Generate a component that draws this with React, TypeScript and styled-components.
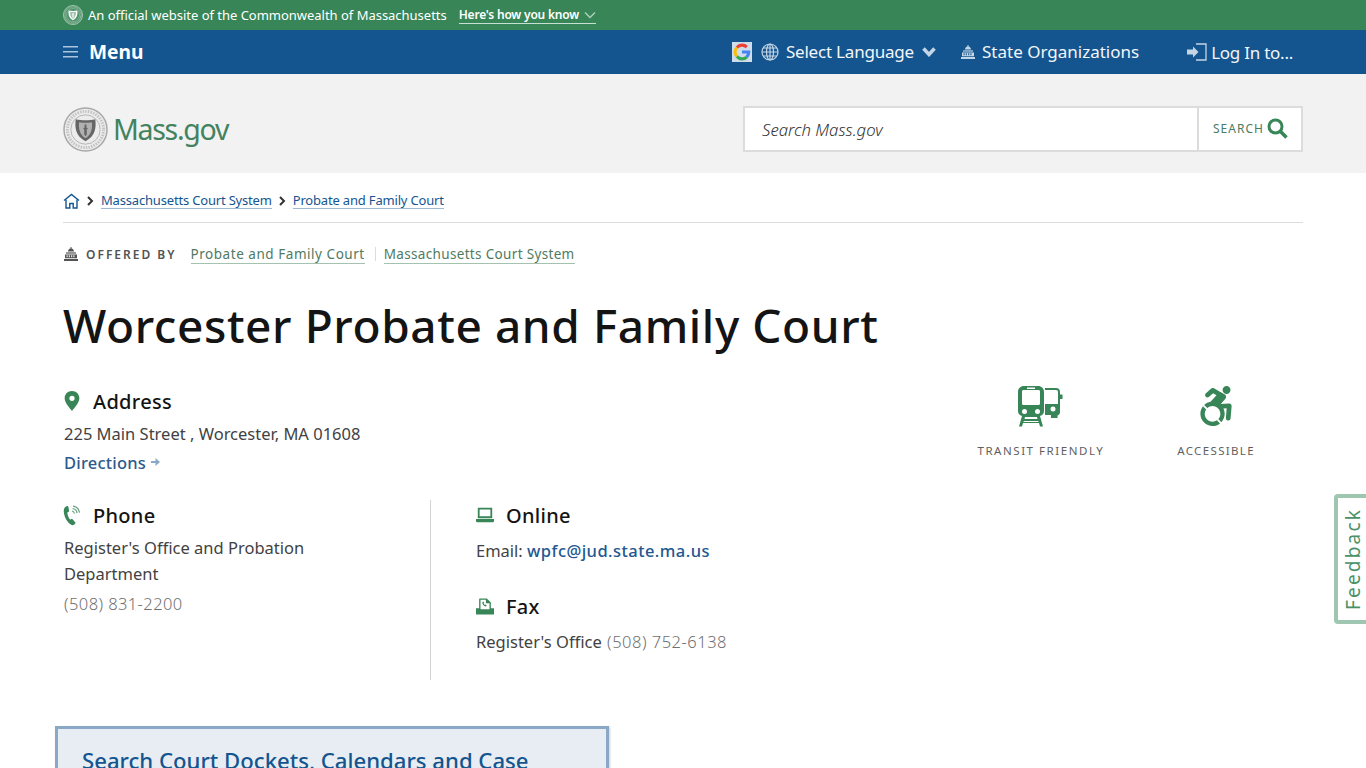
import React from 'react'
import styled, { createGlobalStyle } from 'styled-components'
import { FaAccessibleIcon } from 'react-icons/fa'

const GlobalStyle = createGlobalStyle`
	html, body {
		margin: 0;
		padding: 0;
		height: 768px;
		overflow: hidden;
		background: #fff;
		font-family: "Noto Sans", "Open Sans", sans-serif;
		color: #141414;
	}
	* { box-sizing: border-box; }
	a { text-decoration: none; color: inherit; }
`;

const Page = styled.div`
	position: relative;
	width: 100%;
	height: 768px;
	overflow: hidden;
`;

const SiteBar = styled.div`
	display: flex;
	align-items: center;
	height: 30px;
	padding: 0 63px;
	background: #388557;
	color: #fff;
	font-size: 13px;
`;

const SiteBarText = styled.span`
	margin-left: 5px;
	letter-spacing: -0.02px;
`;

const KnowLink = styled.a`
	display: flex;
	align-items: center;
	gap: 5px;
	margin-left: 12px;
	height: 17px;
	font-size: 12px;
	font-weight: 600;
	letter-spacing: -0.2px;
	border-bottom: 1px solid #c8e0d2;
`;

const NavBar = styled.nav`
	display: flex;
	align-items: center;
	height: 44px;
	padding: 0 63px;
	background: #14558f;
	color: #fff;
`;

const MenuButton = styled.a`
	display: flex;
	align-items: center;
	gap: 11px;
	margin-top: -1px;
	font-size: 19.2px;
	font-weight: 700;
`;

const NavItems = styled.div`
	display: flex;
	align-items: center;
	margin-left: auto;
	margin-right: 10px;
`;

const NavItem = styled.a<{ $left?: number }>`
	display: flex;
	align-items: center;
	margin-left: ${p => p.$left ?? 0}px;
	font-size: 17px;
	line-height: 24px;
	color: #f2f5f9;
	white-space: nowrap;
`;

const NavLabel = styled.span<{ $left: number; $top?: number; $spacing?: number }>`
	display: flex;
	margin-left: ${p => p.$left}px;
	margin-top: ${p => p.$top ?? 0}px;
	letter-spacing: ${p => p.$spacing ?? 0}px;
`;

const GoogleBadge = styled.span`
	display: flex;
	align-items: center;
	justify-content: center;
	width: 20px;
	height: 20px;
	background: #cfdce9;
`;

const Masthead = styled.header`
	display: flex;
	align-items: center;
	justify-content: space-between;
	height: 99px;
	padding: 0 63px;
	background: #f2f2f2;
`;

const Logo = styled.a`
	display: flex;
	align-items: center;
	gap: 5px;
	margin-top: 12px;
`;

const LogoText = styled.span`
	margin-bottom: 2px;
	font-size: 28.5px;
	letter-spacing: -1.3px;
	color: #43825f;
	line-height: 38px;
`;

const SearchBox = styled.div`
	display: flex;
	width: 560px;
	height: 46px;
	margin-top: 11px;
	background: #fff;
	border: 2px solid #dcdcdc;
`;

const SearchInput = styled.div`
	flex: 1;
	display: flex;
	align-items: center;
	padding-left: 17px;
	font-size: 16.7px;
	font-style: italic;
	font-weight: 300;
	color: #333;
`;

const SearchButton = styled.div`
	display: flex;
	align-items: center;
	gap: 3px;
	width: 104px;
	padding: 0 0 1px 14px;
	border-left: 2px solid #dcdcdc;
	font-size: 12px;
	letter-spacing: 1px;
	color: #4c7a62;
`;

const SearchIcon = styled.svg`
	margin-top: -1px;
`;

const Main = styled.main`
	padding: 0 63px;
`;

const Crumbs = styled.div`
	display: flex;
	align-items: center;
	height: 50px;
	padding-top: 6px;
	border-bottom: 1px solid #dcdcdc;
	font-size: 13px;
	letter-spacing: -0.18px;
	color: #14558f;
`;

const CrumbLink = styled.a`
	line-height: 16px;
	border-bottom: 1px solid #9cb9d3;
`;

const CrumbArrow = styled.svg`
	margin: 0 7px 0 7px;
`;

const OfferedRow = styled.div`
	display: flex;
	align-items: center;
	height: 20px;
	margin-top: 21px;
`;

const OfferedLabel = styled.span`
	margin-left: 7px;
	font-size: 12px;
	font-weight: 600;
	letter-spacing: 2px;
	color: #535353;
`;

const OfferedLink = styled.a<{ $first?: boolean }>`
	margin-left: ${p => (p.$first ? 14 : 8)}px;
	margin-top: 2px;
	font-size: 13.5px;
	line-height: 17px;
	letter-spacing: ${p => (p.$first ? 0.54 : 0.33)}px;
	color: #4f7a63;
	border-bottom: 1px solid #a3c3b0;
`;

const OfferedDivider = styled.span`
	width: 1px;
	height: 14px;
	margin-left: 10px;
	background: #dcdcdc;
`;

const Title = styled.h1`
	margin: 31px 0 0;
	font-size: 46px;
	line-height: 60px;
	font-weight: 500;
	letter-spacing: 0.59px;
	color: #141414;
`;

const InfoGrid = styled.div`
	display: flex;
	justify-content: space-between;
	margin-top: 31px;
`;

const ContactColumn = styled.div`
	width: 700px;
`;

const SectionHead = styled.div`
	display: flex;
	align-items: center;
	gap: 12px;
	height: 30px;
	font-size: 20px;
	font-weight: 500;
	letter-spacing: 0.3px;
	color: #141414;
`;

const IconSlot = styled.span`
	display: flex;
	justify-content: center;
	width: 18px;
`;

const BodyLine = styled.div<{ $top?: number; $indent?: boolean }>`
	margin-top: ${p => p.$top ?? 0}px;
	margin-left: ${p => (p.$indent ? 1 : 0)}px;
	font-size: 16.5px;
	line-height: 26px;
	color: #424242;
`;

const DirectionsLink = styled.a`
	display: flex;
	align-items: center;
	gap: 5px;
	margin: 2px 0 0 1px;
	height: 26px;
	font-size: 16.5px;
	font-weight: 500;
	letter-spacing: 0.2px;
	color: #2c5a8c;
`;

const ContactRow = styled.div`
	display: flex;
	margin-top: 25px;
`;

const PhoneBlock = styled.div`
	width: 368px;
	height: 180px;
	border-right: 1px solid #d4d4d4;
`;

const PhoneText = styled.div`
	width: 270px;
	margin: 5px 0 0 1px;
	font-size: 16.5px;
	line-height: 26px;
	color: #424242;
`;

const PhoneNumber = styled.div`
	margin: 4px 0 0 1px;
	font-size: 16.5px;
	line-height: 26px;
	font-weight: 300;
	letter-spacing: 0.4px;
	color: #6f6f6f;
`;

const OnlineBlock = styled.div`
	padding-left: 45px;
`;

const SectionGap = styled.div`
	height: 27px;
`;

const EmailLink = styled.a`
	font-weight: 500;
	letter-spacing: 0.45px;
	color: #22578f;
`;

const FaxNumber = styled.span`
	margin-left: 1px;
	font-weight: 300;
	letter-spacing: 0.5px;
	color: #6f6f6f;
`;

const Badges = styled.div`
	display: flex;
	gap: 73px;
	margin-right: 48px;
`;

const Badge = styled.div`
	display: flex;
	flex-direction: column;
	align-items: center;
	gap: 15px;
`;

const BadgeIcon = styled.div`
	display: flex;
	justify-content: center;
	height: 42px;
	color: #388557;
`;

const BadgeLabel = styled.span<{ $spacing: number }>`
	font-size: 11.5px;
	line-height: 16px;
	letter-spacing: ${p => p.$spacing}px;
	color: #5f5f5f;
`;

const Callout = styled.section`
	width: 554px;
	height: 120px;
	margin: 46px 0 0 -8px;
	padding: 16px 24px;
	background: #e8edf4;
	border: 3px solid #8aa9c7;
	box-shadow: 1px 1px 2px rgba(0, 0, 0, 0.2);
`;

const CalloutTitle = styled.h2`
	margin: 0;
	font-size: 22.15px;
	line-height: 30px;
	font-weight: 500;
	color: #14558f;
`;

const FeedbackTab = styled.a`
	position: absolute;
	top: 494px;
	right: -4px;
	display: flex;
	align-items: center;
	justify-content: center;
	width: 36px;
	height: 130px;
	padding-left: 2px;
	background: #fff;
	border: 4px solid #9fc6b0;
	border-radius: 4px;
`;

const FeedbackText = styled.span`
	transform: rotate(-90deg);
	white-space: nowrap;
	font-size: 19px;
	letter-spacing: 2.2px;
	color: #4a9168;
`;

const Capitol = ({ size = 16, color = '#fff' }: { size?: number; color?: string }) => (
	<svg width={size} height={size} viewBox="0 0 16 16" fill={color}>
		<path d="M7.500 1h1v1.600c1.400.3 2.400 1.400 2.600 3H4.900c.2-1.600 1.200-2.700 2.600-3z" />
		<path d="M3 6.400h10v1.200H3z" />
		<path d="M2 8.400h12v3.800H2zm1.600.9v2h1v-2zm2.200 0v2h1v-2zm2.400 0v2h1v-2zm2.200 0v2h1v-2z" fillRule="evenodd" />
		<path d="M1 13h14v2H1z" />
	</svg>
);

const Seal = ({ size, tint, ring, bg }: { size: number; tint: string; ring: string; bg: string }) => (
	<svg width={size} height={size} viewBox="0 0 46 46">
		<circle cx="23" cy="23" r="22" fill={bg} stroke={ring} strokeWidth="1.500" />
		<circle cx="23" cy="23" r="18.500" fill="none" stroke={ring} strokeWidth="3" strokeDasharray="1.500 1.200" opacity="0.6" />
		<circle cx="23" cy="23" r="15" fill="none" stroke={ring} strokeWidth="0.800" />
		<path d="M13 12.500c6 1.500 14 1.500 20 0 1 8 .5 17-10 22.500-10.500-5.500-11-14.500-10-22.500z" fill={tint} />
		<path d="M16.500 15.500c4 .8 9 .8 13 0 .6 6 0 12-6.500 16.500-6.500-4.500-7.100-10.500-6.500-16.500z" fill={bg} opacity="0.55" />
		<path d="M22 18h2v3l1.500 1-1.200 1v5l-1.300 2-1.300-2v-5l-1.200-1L22 21z" fill={tint} />
	</svg>
);

const Chevron = ({ color, width = 2 }: { color: string; width?: number }) => (
	<svg width="12" height="8" viewBox="0 0 12 8" fill="none" stroke={color} strokeWidth={width}>
		<path d="M1 1.500l5 5 5-5" />
	</svg>
);

const CrumbChevron = () => (
	<CrumbArrow width="7" height="10" viewBox="0 0 7 10" fill="none" stroke="#333" strokeWidth="2">
		<path d="M1 1l4 4-4 4" />
	</CrumbArrow>
);

const TransitIcon = () => (
	<svg width="46" height="41" viewBox="0 0 46 41" fill="#388557" fillRule="evenodd">
		<path d="M6 0h14c3.500 0 6 2.500 6 6v19c0 2.500-1.500 4.500-4 5l3 10.500h-3l-1-3.500H5l-1 3.500H1L4 30c-2.500-.5-4-2.500-4-5V6c0-3.500 2.500-6 6-6zM9 1.500V3h8V1.500zM5.500 4C4.600 4 4 4.600 4 5.500v12c0 .9.600 1.500 1.500 1.500h15c.9 0 1.500-.6 1.500-1.500v-12c0-.9-.6-1.500-1.500-1.500zM6.500 23a2.500 2.500 0 100 5 2.500 2.500 0 000-5zm13 0a2.500 2.500 0 100 5 2.500 2.500 0 000-5zM7 31l-.5 2h13l-.5-2zm-1.200 4l-.3 1h15l-.3-1z" />
		<path d="M27 2h11c2.500 0 4 1.500 4 4v2.500h2.500V13H42v13c0 2-1 3-2.500 3.500V32H33v-3h-6V18h13V6c0-1.200-.8-2-2-2H27zm8 18.500a2.500 2.500 0 100 5 2.500 2.500 0 000-5z" />
	</svg>
);

export default function App() {
	return (
		<Page>
			<GlobalStyle />
			<SiteBar>
				<Seal size={20} tint="#fff" ring="#cfe3d7" bg="#4f9169" />
				<SiteBarText>An official website of the Commonwealth of Massachusetts</SiteBarText>
				<KnowLink href="#">
					Here's how you know
					<Chevron color="#a9d0b9" width={1.500} />
				</KnowLink>
			</SiteBar>
			<NavBar>
				<MenuButton href="#">
					<svg width="15" height="12" viewBox="0 0 15 12" fill="#a9c6e0">
						<path d="M0 0h15v1.500H0zM0 5h15v1.500H0zM0 10h15v1.500H0z" />
					</svg>
					Menu
				</MenuButton>
				<NavItems>
					<GoogleBadge>
						<svg width="18" height="18" viewBox="0 0 16 16" fill="none" strokeWidth="2.800">
							<path d="M12.300 3.700A6 6 0 003.500 4" stroke="#ea4335" />
							<path d="M3.500 4a6 6 0 000 8" stroke="#fbbc05" />
							<path d="M3.500 12a6 6 0 008.600.5" stroke="#34a853" />
							<path d="M12.100 12.500A6 6 0 0014 8H8" stroke="#4285f4" />
						</svg>
					</GoogleBadge>
					<NavItem href="#" $left={9}>
						<svg width="18" height="18" viewBox="0 0 18 18" fill="none" stroke="#c4d6e6" strokeWidth="1.200">
							<circle cx="9" cy="9" r="8" />
							<ellipse cx="9" cy="9" rx="3.500" ry="8" />
							<path d="M9 1v16M1 9h16M2 5h14M2 13h14" />
						</svg>
						<NavLabel $left={7} $spacing={-0.2}>Select Language</NavLabel>
						<NavLabel $left={8}>
							<svg width="14" height="10" viewBox="0 0 14 10" fill="none" stroke="#c4d6e6" strokeWidth="3.500">
								<path d="M1.500 1.500L7 7.500l5.500-6" />
							</svg>
						</NavLabel>
					</NavItem>
					<NavItem href="#" $left={24}>
						<Capitol size={16} color="#c4d6e6" />
						<NavLabel $left={6}>State Organizations</NavLabel>
					</NavItem>
					<NavItem href="#" $left={48}>
						<svg width="20" height="18" viewBox="0 0 20 18" fill="none">
							<path d="M0 6.500h6V3.500L11.500 9 6 14.500v-3H0z" fill="#c4d6e6" />
							<path d="M9 1h10v16H9" stroke="#c4d6e6" strokeWidth="1.300" />
						</svg>
						<NavLabel $left={4} $top={1} $spacing={-0.25}>Log In to...</NavLabel>
					</NavItem>
				</NavItems>
			</NavBar>
			<Masthead>
				<Logo href="#">
					<Seal size={45} tint="#666" ring="#a8a8a8" bg="#ececec" />
					<LogoText>Mass.gov</LogoText>
				</Logo>
				<SearchBox>
					<SearchInput>Search Mass.gov</SearchInput>
					<SearchButton>
						SEARCH
						<SearchIcon width="21" height="21" viewBox="0 0 21 21" fill="none" stroke="#388557">
							<circle cx="8.500" cy="8.500" r="6.500" strokeWidth="3" />
							<path d="M13.500 13.500l6 6" strokeWidth="3.500" />
						</SearchIcon>
					</SearchButton>
				</SearchBox>
			</Masthead>
			<Main>
				<Crumbs>
					<svg width="17" height="16" viewBox="0 0 17 16" fill="none" stroke="#14558f" strokeWidth="1.400">
						<path d="M1 7.500L8.500 1.500 16 7.500" />
						<path d="M3 6.500V15h3.800v-4.500h3.400V15H14V6.500" />
					</svg>
					<CrumbChevron />
					<CrumbLink href="#">Massachusetts Court System</CrumbLink>
					<CrumbChevron />
					<CrumbLink href="#">Probate and Family Court</CrumbLink>
				</Crumbs>
				<OfferedRow>
					<Capitol size={16} color="#535353" />
					<OfferedLabel>OFFERED BY</OfferedLabel>
					<OfferedLink href="#" $first>Probate and Family Court</OfferedLink>
					<OfferedDivider />
					<OfferedLink href="#">Massachusetts Court System</OfferedLink>
				</OfferedRow>
				<Title>Worcester Probate and Family Court</Title>
				<InfoGrid>
					<ContactColumn>
						<SectionHead>
							<IconSlot>
								<svg width="16" height="20" viewBox="0 0 15 19" fill="#388557">
									<path fillRule="evenodd" d="M7.500 0C3.400 0 .5 3 .5 7c0 4 4.500 9 7 12 2.500-3 7-8 7-12 0-4-2.900-7-7-7zm0 4.500a2.500 2.500 0 110 5 2.500 2.500 0 010-5z" />
								</svg>
							</IconSlot>
							Address
						</SectionHead>
						<BodyLine $top={5} $indent>225 Main Street , Worcester, MA 01608</BodyLine>
						<DirectionsLink href="#">
							Directions
							<svg width="9" height="8" viewBox="0 0 9 8" fill="#8aa9c7">
								<path d="M0 3h4.500V0L9 4 4.500 8V5H0z" />
							</svg>
						</DirectionsLink>
						<ContactRow>
							<PhoneBlock>
								<SectionHead>
									<IconSlot>
										<svg width="19" height="21" viewBox="0 0 18 20" fill="none">
											<path d="M4 .5C1.500 1.500.5 3.500.8 6.500c.5 5 3.200 10 7 12.600 1.200.8 2.400.8 3.400 0l1-1c.4-.4.400-1 0-1.400l-2.700-3c-.4-.4-1-.4-1.400-.1l-.9.7C5.500 12.500 4.500 9.500 4.300 7l1.100-.4c.5-.2.800-.7.700-1.200L5.300 1.200C5.200.5 4.600.2 4 .5z" fill="#388557" />
											<path d="M9 5.500c1.300.2 2.200 1.100 2.400 2.500M9.500 3c2.500.3 4.200 2.100 4.600 4.600M10 .7c3.500.5 6 3 6.500 6.500" stroke="#6ba383" strokeWidth="1.200" />
										</svg>
									</IconSlot>
									Phone
								</SectionHead>
								<PhoneText>Register's Office and Probation Department</PhoneText>
								<PhoneNumber>(508) 831-2200</PhoneNumber>
							</PhoneBlock>
							<OnlineBlock>
								<SectionHead>
									<IconSlot>
										<svg width="20" height="16" viewBox="0 0 20 16" fill="#388557">
											<path fillRule="evenodd" d="M2 0h16v11.500H2zm2 2v7.500h12V2z" />
											<path d="M0 12.500h20V15c0 .5-.5 1-1 1H1c-.5 0-1-.5-1-1z" />
										</svg>
									</IconSlot>
									Online
								</SectionHead>
								<BodyLine $top={8}>
									Email: <EmailLink href="#">wpfc@jud.state.ma.us</EmailLink>
								</BodyLine>
								<SectionGap />
								<SectionHead>
									<IconSlot>
										<svg width="20" height="19" viewBox="0 0 20 18" fill="#388557">
											<path fillRule="evenodd" d="M0 11h3.500V1c0-.5.5-1 1-1h7.500L16.500 4.500V11H20v7H0zM5 1.500V12h10V5.500h-4v-4zm3 2L7 4.500c0 2 1.500 4 4 4.500l1-1.200-1.500-1-.8.5c-.5-.3-1-1-1.200-1.500l.7-.8z" />
										</svg>
									</IconSlot>
									Fax
								</SectionHead>
								<BodyLine $top={8}>
									Register's Office <FaxNumber>(508) 752-6138</FaxNumber>
								</BodyLine>
							</OnlineBlock>
						</ContactRow>
					</ContactColumn>
					<Badges>
						<Badge>
							<BadgeIcon>
								<TransitIcon />
							</BadgeIcon>
							<BadgeLabel $spacing={1.55}>TRANSIT FRIENDLY</BadgeLabel>
						</Badge>
						<Badge>
							<BadgeIcon>
								<FaAccessibleIcon size={40} />
							</BadgeIcon>
							<BadgeLabel $spacing={1.35}>ACCESSIBLE</BadgeLabel>
						</Badge>
					</Badges>
				</InfoGrid>
				<Callout>
					<CalloutTitle>Search Court Dockets, Calendars and Case</CalloutTitle>
				</Callout>
			</Main>
			<FeedbackTab href="#">
				<FeedbackText>Feedback</FeedbackText>
			</FeedbackTab>
		</Page>
	);
}
